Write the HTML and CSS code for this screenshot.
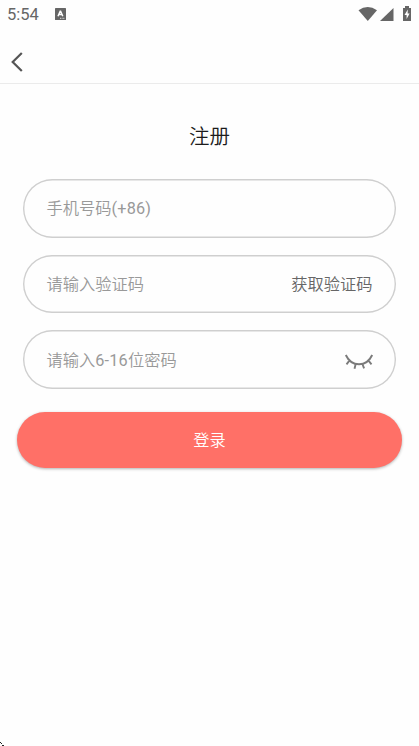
FILE: index.html
```html
<!DOCTYPE html>
<html lang="zh-CN">
<head>
<meta charset="utf-8">
<title>注册</title>
<link rel="stylesheet" href="styles.css">
</head>
<body>
<header class="status">
  <span class="time">5:54</span>
  <svg class="app-icon" width="11" height="12" viewBox="0 0 11 12"><rect width="11" height="12" rx=".6" fill="#666"/><path d="M3 8.200 5.200 3.200h.4l2.200 5M4 6.600h3" fill="none" stroke="#fff" stroke-width="1.500"/><path d="M5 10.300h5" stroke="#fff" stroke-width=".8" stroke-dasharray="1 .6"/></svg>
  <span class="indicators">
    <svg width="52" height="16" viewBox="0 0 52 16"><g fill="#666"><path d="M-.5 4.300Q8.700-2.300 18 4.300L8.800 15Z"/><path d="M34.500 2v13H21Z"/><path d="M44 2h2V0h4v2h2v13H44Z"/></g><path d="M48.800 3.500 45.500 9h2.100v4l3-5.500h-2Z" fill="#fff"/></svg>
  </span>
</header>
<nav class="nav">
  <svg width="12" height="20" viewBox="0 0 12 20"><path d="M10.800 1 1.700 10l9.100 9" fill="none" stroke="#555" stroke-width="2.200"/></svg>
</nav>
<main>
  <h1>注册</h1>
  <form class="fields">
    <div class="field"><span>手机号码<span class="latin">(+86)</span></span></div>
    <div class="field"><span>请输入验证码</span><span class="code">获取验证码</span></div>
    <div class="field"><span>请输入<span class="latin">6-16</span>位密码</span>
      <svg class="eye" width="28" height="16" viewBox="0 0 28 16"><path d="M.8 1C6.500 13.300 21.500 13.300 27.200 1M4.400 6.700 1.500 10.300M10.700 10l-1.200 4.700M17.400 10l1.700 4.400M23.500 6.700l3 3.600" fill="none" stroke="#7b7b7b" stroke-width="1.900"/></svg>
    </div>
  </form>
  <div class="submit">登录</div>
</main>
<svg class="corner" width="4" height="4" viewBox="0 0 4 4"><path d="M0 0h1v1H0zM1 1h1v1H1zM2 3h2v1H2z" fill="#222"/></svg>
</body>
</html>
```
FILE: styles.css
```css
* { box-sizing: border-box; }
body {
  margin: 0;
  height: 746px;
  overflow: hidden;
  background: #fefefe;
  font-family: Roboto, "Noto Sans CJK SC", sans-serif;
  font-weight: 350;
}
svg { display: block; overflow: visible; }
.status {
  height: 40px;
  padding: 6px 8px 0 7px;
  display: flex;
  align-items: flex-start;
  color: #666;
}
.time { font-size: 16.5px; line-height: 18px; font-weight: 400; width: 48px; }
.app-icon { margin-top: 2px; }
.indicators { margin-left: auto; }
.nav {
  height: 44px;
  padding: 12px 11px;
  border-bottom: 1px solid #ebebeb;
}
main { padding: 37px 17px 0; }
h1 {
  margin: 0;
  font-size: 20.5px;
  line-height: 32px;
  font-weight: 350;
  text-align: center;
  color: #1c1c1c;
}
.fields {
  margin: 26px 6px 0;
  display: flex;
  flex-direction: column;
  gap: 17.2px;
}
.field {
  height: 58.5px;
  padding: 0 23.500px 2px;
  border-radius: 29.250px;
  box-shadow: inset 0 0 0 1.4px #cfcfcf;
  display: flex;
  align-items: center;
  justify-content: space-between;
  font-size: 16.25px;
  color: #999;
}
.latin { font-weight: 380; letter-spacing: .2px; }
.code { color: #666; }
.eye { margin-top: 7px; }
.submit {
  margin-top: 23px;
  height: 56px;
  padding-top: 1px;
  border-radius: 28px;
  background: #ff7067;
  box-shadow: 0 1px 3px rgba(0, 0, 0, .3);
  color: #fff;
  font-size: 16.2px;
  line-height: 56px;
  text-align: center;
}
.corner { position: absolute; left: 0; bottom: 0; }
```
